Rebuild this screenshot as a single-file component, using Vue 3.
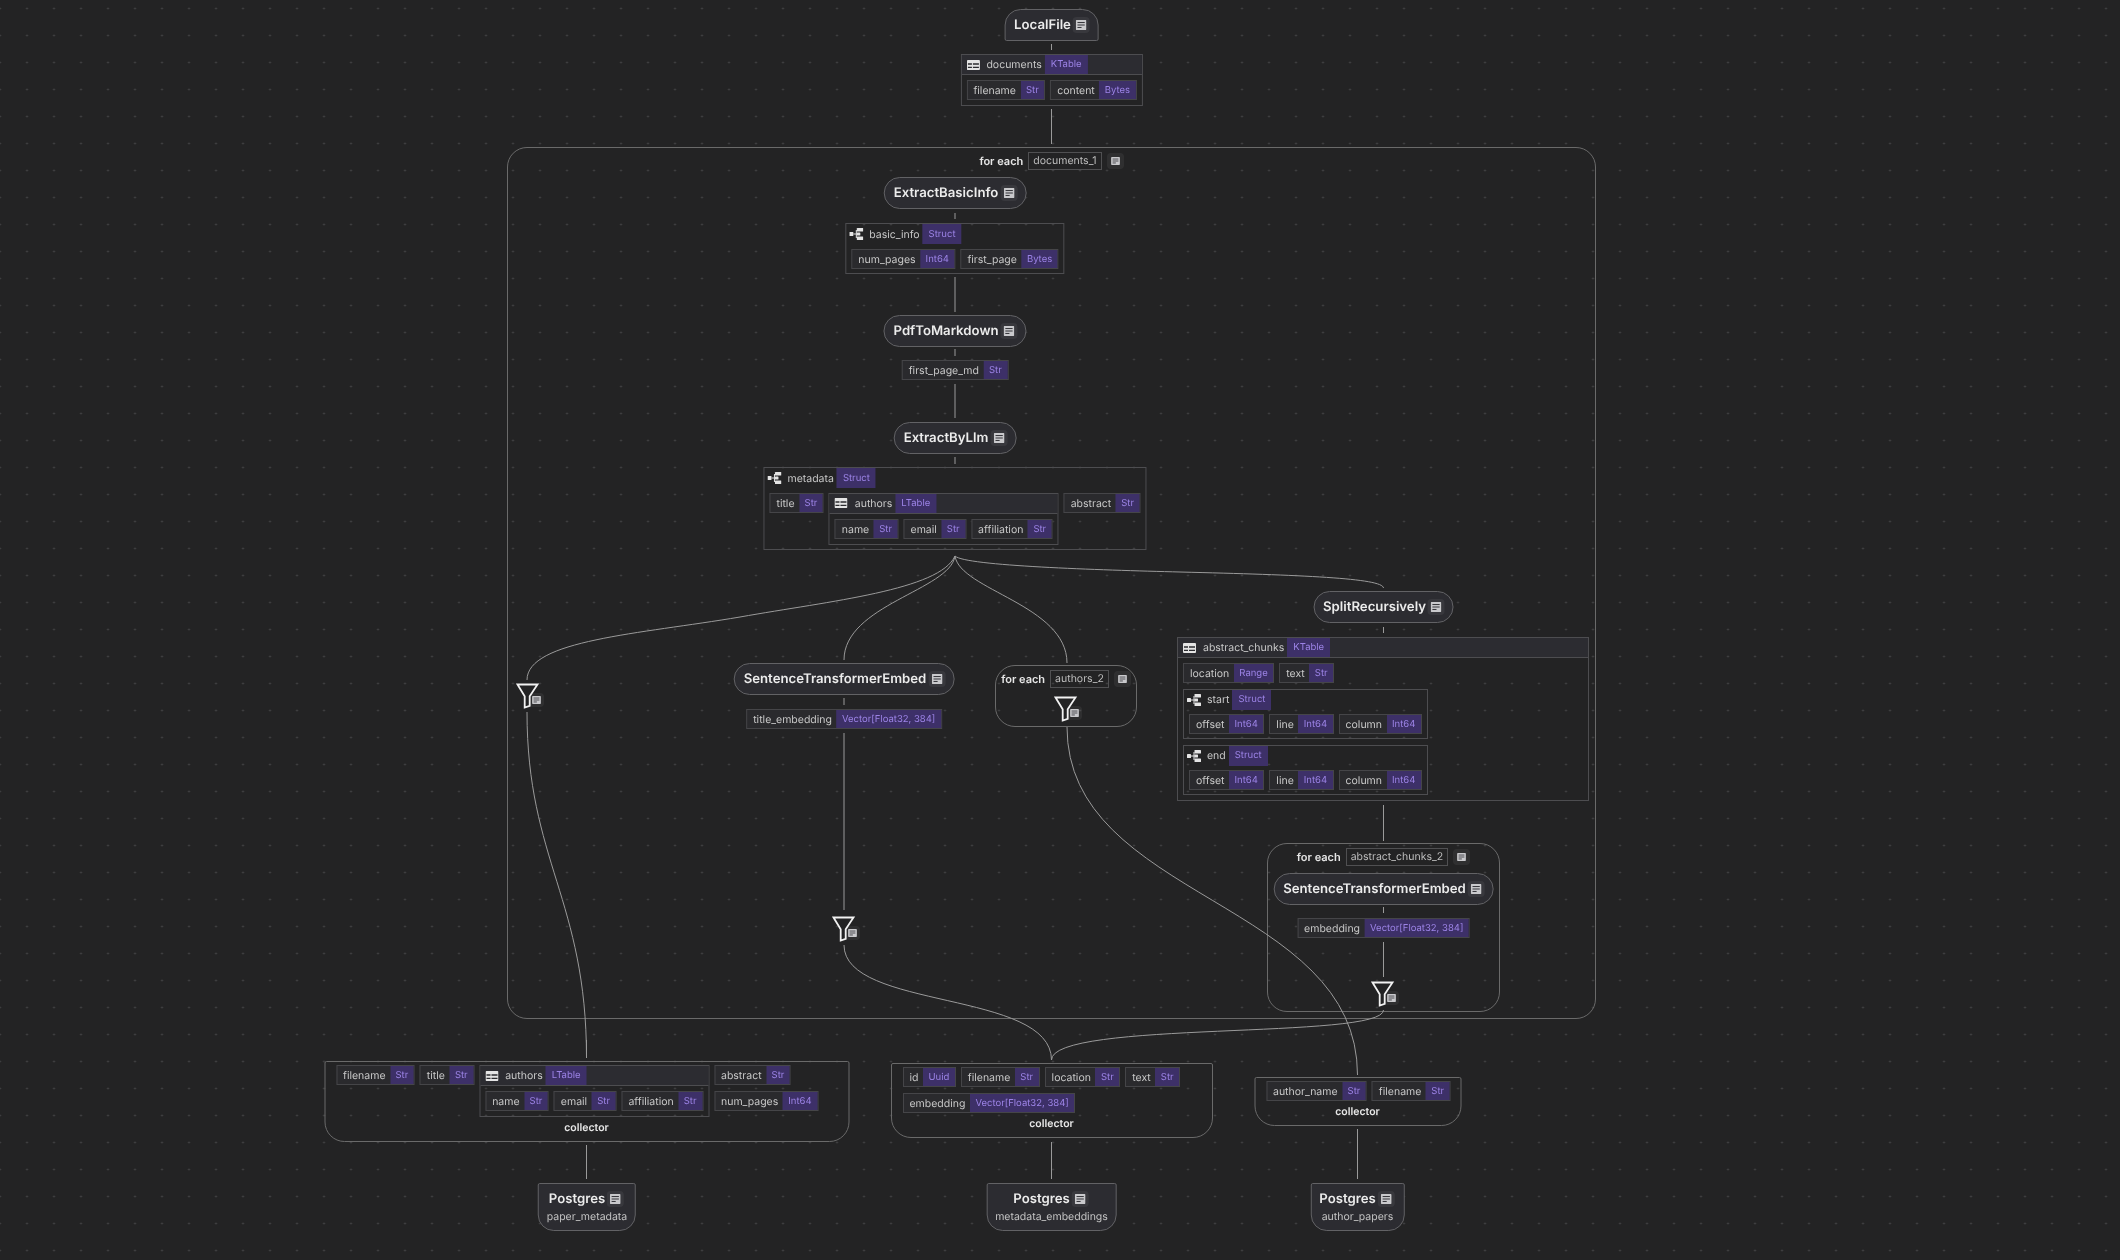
<template>
  <div class="canvas">
    <svg class="defs" width="0" height="0">
      <symbol id="note" viewBox="0 0 12 11">
        <rect width="12" height="11" rx="1" fill="#c9c9cc" />
        <path d="M2 2.8h8M2 5.5h8M2 8.2h4.5" stroke="#333338" stroke-width="1.1" fill="none" />
      </symbol>
      <symbol id="table" viewBox="0 0 13 10">
        <rect width="13" height="10" rx="1" fill="#e4e4e4" />
        <path d="M1 4h4M1 7.4h4M6 4h6M6 7.4h6" stroke="#2b2b2f" stroke-width="1.3" fill="none" />
      </symbol>
      <symbol id="struct" viewBox="0 0 14 12">
        <rect x="0" y="4" width="4" height="4" rx=".6" fill="#e4e4e4" />
        <path d="M4 6h4M7 2v8" stroke="#e4e4e4" stroke-width="1" fill="none" />
        <rect x="7.5" y="0" width="6.5" height="3.6" rx=".6" fill="#e4e4e4" />
        <rect x="7.5" y="4.4" width="3.5" height="3.2" rx=".6" fill="#e4e4e4" />
        <rect x="7.5" y="8.4" width="6.5" height="3.6" rx=".6" fill="#e4e4e4" />
      </symbol>
    </svg>

    <div
      v-for="g in groups"
      :key="g.name"
      class="node foreach"
      :style="{ left: g.x + 'px', top: g.y + 'px', width: g.w + 'px', height: g.h + 'px' }"
    >
      <div class="foreach-head">
        <span class="foreach-label">for each</span>
        <span class="foreach-name">{{ g.name }}</span>
        <span class="note-box"><svg class="note"><use href="#note" /></svg></span>
      </div>
    </div>

    <svg class="edges" width="2120" height="1260" viewBox="0 0 2120 1260">
      <path v-for="(d, i) in edges" :key="i" :d="d" />
    </svg>

    <div
      v-for="p in pills"
      :key="p.id"
      class="node op"
      :class="p.shape"
      :style="{ left: p.cx + 'px', top: p.y + 'px' }"
    >
      <div class="op-title">
        <span>{{ p.name }}</span>
        <span class="note-box"><svg class="note"><use href="#note" /></svg></span>
      </div>
      <div v-if="p.sub" class="op-sub">{{ p.sub }}</div>
    </div>

    <div
      v-for="s in schemas"
      :key="s.id"
      class="node"
      :class="{ collector: s.label }"
      :style="{ left: s.cx + 'px', top: s.y + 'px', width: s.w ? s.w + 'px' : null }"
    >
      <div class="schema" :class="[s.icon, { bare: !s.name }]">
        <div v-if="s.name" class="head">
          <svg :class="'ic-' + s.icon"><use :href="'#' + s.icon" /></svg>
          <span class="head-name">{{ s.name }}</span>
          <span class="tag">{{ s.type }}</span>
        </div>
        <div class="body">
          <div v-for="(row, ri) in s.rows" :key="ri" class="row">
            <template v-for="(it, ii) in row" :key="ii">
              <div v-if="it.stack" class="stack">
                <div v-for="f in it.stack" :key="f[0]" class="field">
                  <span class="fname">{{ f[0] }}</span><span class="tag">{{ f[1] }}</span>
                </div>
              </div>
              <div v-else-if="it.rows" class="schema" :class="it.icon">
                <div class="head">
                  <svg :class="'ic-' + it.icon"><use :href="'#' + it.icon" /></svg>
                  <span class="head-name">{{ it.name }}</span>
                  <span class="tag">{{ it.type }}</span>
                </div>
                <div class="body">
                  <div v-for="(r, rj) in it.rows" :key="rj" class="row">
                    <div v-for="f in r" :key="f[0]" class="field">
                      <span class="fname">{{ f[0] }}</span><span class="tag">{{ f[1] }}</span>
                    </div>
                  </div>
                </div>
              </div>
              <div v-else class="field">
                <span class="fname">{{ it[0] }}</span><span class="tag">{{ it[1] }}</span>
              </div>
            </template>
          </div>
        </div>
      </div>
      <div v-if="s.label" class="collector-label">{{ s.label }}</div>
    </div>

    <div
      v-for="f in filters"
      :key="f.x"
      class="filter"
      :style="{ left: f.x + 'px', top: f.y + 'px' }"
    >
      <svg width="24" height="26" viewBox="0 0 24 26">
        <path d="M1.5 1.5h20L13.7 13.2v9.6l-5 1.7V13.2z" fill="#232324" stroke="#f2f2f2" stroke-width="1.8" stroke-linejoin="miter" />
      </svg>
      <span class="note-box filter-note"><svg class="note"><use href="#note" /></svg></span>
    </div>
  </div>
</template>

<script setup>
const groups = [
  { name: 'documents_1', x: 507, y: 147, w: 1089, h: 872 },
  { name: 'authors_2', x: 995, y: 665, w: 142, h: 62 },
  { name: 'abstract_chunks_2', x: 1267, y: 843, w: 233, h: 169 }
]

const pills = [
  { id: 'local', name: 'LocalFile', cx: 1051.5, y: 9, shape: 'top' },
  { id: 'basic', name: 'ExtractBasicInfo', cx: 955, y: 177, shape: 'pill' },
  { id: 'pdf', name: 'PdfToMarkdown', cx: 955, y: 315, shape: 'pill' },
  { id: 'llm', name: 'ExtractByLlm', cx: 955, y: 422, shape: 'pill' },
  { id: 'split', name: 'SplitRecursively', cx: 1383.5, y: 591, shape: 'pill' },
  { id: 'ste1', name: 'SentenceTransformerEmbed', cx: 844, y: 663, shape: 'pill' },
  { id: 'ste2', name: 'SentenceTransformerEmbed', cx: 1383.5, y: 873, shape: 'pill' },
  { id: 'pg1', name: 'Postgres', sub: 'paper_metadata', cx: 587, y: 1183, shape: 'bottom' },
  { id: 'pg2', name: 'Postgres', sub: 'metadata_embeddings', cx: 1051.5, y: 1183, shape: 'bottom' },
  { id: 'pg3', name: 'Postgres', sub: 'author_papers', cx: 1357.5, y: 1183, shape: 'bottom' }
]

const nameEmailAff = [[['name', 'Str'], ['email', 'Str'], ['affiliation', 'Str']]]
const offsets = [[['offset', 'Int64'], ['line', 'Int64'], ['column', 'Int64']]]

const schemas = [
  {
    id: 'documents', name: 'documents', type: 'KTable', icon: 'table', cx: 1051.5, y: 54,
    rows: [[['filename', 'Str'], ['content', 'Bytes']]]
  },
  {
    id: 'basic_info', name: 'basic_info', type: 'Struct', icon: 'struct', cx: 955, y: 223,
    rows: [[['num_pages', 'Int64'], ['first_page', 'Bytes']]]
  },
  { id: 'first_page_md', cx: 955, y: 360, rows: [[['first_page_md', 'Str']]] },
  {
    id: 'metadata', name: 'metadata', type: 'Struct', icon: 'struct', cx: 955, y: 467,
    rows: [[
      ['title', 'Str'],
      { name: 'authors', type: 'LTable', icon: 'table', rows: nameEmailAff },
      ['abstract', 'Str']
    ]]
  },
  {
    id: 'abstract_chunks', name: 'abstract_chunks', type: 'KTable', icon: 'table', cx: 1383, y: 637, w: 412,
    rows: [
      [['location', 'Range'], ['text', 'Str']],
      [{ name: 'start', type: 'Struct', icon: 'struct', rows: offsets }],
      [{ name: 'end', type: 'Struct', icon: 'struct', rows: offsets }]
    ]
  },
  { id: 'title_embedding', cx: 844, y: 709, rows: [[['title_embedding', 'Vector[Float32, 384]']]] },
  { id: 'embedding', cx: 1383.5, y: 918, rows: [[['embedding', 'Vector[Float32, 384]']]] },
  {
    id: 'c1', label: 'collector', cx: 586.5, y: 1061, w: 525,
    rows: [[
      ['filename', 'Str'],
      ['title', 'Str'],
      { name: 'authors', type: 'LTable', icon: 'table', rows: nameEmailAff },
      { stack: [['abstract', 'Str'], ['num_pages', 'Int64']] }
    ]]
  },
  {
    id: 'c2', label: 'collector', cx: 1051.5, y: 1063, w: 322,
    rows: [
      [['id', 'Uuid'], ['filename', 'Str'], ['location', 'Str'], ['text', 'Str']],
      [['embedding', 'Vector[Float32, 384]']]
    ]
  },
  {
    id: 'c3', label: 'collector', cx: 1357.5, y: 1077, w: 207,
    rows: [[['author_name', 'Str'], ['filename', 'Str']]]
  }
]

const filters = [
  { x: 516.4, y: 683 },
  { x: 832.4, y: 916 },
  { x: 1054.4, y: 696 },
  { x: 1371.4, y: 981 }
]

const edges = [
  'M1051.5 44V50', 'M1051.5 109V144',
  'M955 213V219', 'M955 277V312', 'M955 349V356', 'M955 384V418', 'M955 457V464',
  'M1383.5 627V633', 'M1383.5 805V841',
  'M844 698V705', 'M844 733V910',
  'M1383.5 907V913', 'M1383.5 942V977',
  'M586.5 1145V1179', 'M1051.5 1142V1179', 'M1357.5 1129V1179', 'M586.5 1040V1058',
  'M955 556C940 590 830 601 740 617C640 634 527 640 527 680',
  'M955 556C950 590 844 605 844 660',
  'M955 556C960 590 1067 605 1067 663',
  'M955 556C965 566 1100 570 1180 572C1300 575 1383 578 1383.5 588',
  'M527 712C527 860 586.5 900 586.5 1058',
  'M844 945C844 1010 1051.5 990 1051.5 1060',
  'M1383.5 1010C1383.5 1040 1051.5 1020 1051.5 1060',
  'M1067 727C1067 900 1357.5 900 1357.5 1075'
]
</script>

<style>
html, body { margin: 0; background: #232324; }
</style>

<style scoped>
.canvas {
  position: relative;
  width: 2120px;
  height: 1260px;
  overflow: hidden;
  background-color: #232324;
  background-image: radial-gradient(circle, #4a4a4c 0.8px, transparent 1.1px);
  background-size: 27px 27px;
  background-position: -13.5px -5px;
  font-family: Inter, "Liberation Sans", sans-serif;
  color: #cfcfcf;
  text-rendering: geometricPrecision;
  filter: blur(0.3px);
}
.defs { position: absolute; }
.edges { position: absolute; inset: 0; pointer-events: none; }
.edges path { fill: none; stroke: #9a9a9a; stroke-width: 1; }

.node { position: absolute; transform: translateX(-50%); }
.foreach { transform: none; box-sizing: border-box; border: 1.2px solid #6a6a6a; border-radius: 20px; }
.foreach-head {
  display: flex; align-items: center; justify-content: center; gap: 5px;
  height: 18px; margin-top: 4px;
}
.foreach-label { font-size: 11px; font-weight: 600; color: #e6e6e6; }
.foreach-name {
  font-size: 10.5px; line-height: 16px; padding: 0 4px; color: #bdbdbd;
  border: 1px solid #505052;
}

.note-box {
  display: inline-flex; padding: 3px; border-radius: 4px; background: rgba(255, 255, 255, .06);
}
.note { width: 11px; height: 10px; display: block; }
.foreach-head .note-box { padding: 4px; }
.foreach-head .note { width: 9px; height: 8px; }

.op {
  box-sizing: border-box; background: #2c2c31; border: 1.2px solid #626265;
  white-space: nowrap;
}
.op-title {
  display: flex; align-items: center; justify-content: center; gap: 2px;
  font-size: 13.2px; font-weight: 600; color: #ececec; line-height: 19px;
}
.op-title .note-box { margin: -1px 1px 0 0; }
.op-sub { font-size: 10.5px; color: #c4c4c4; line-height: 14px; text-align: center; margin-top: 1px; }
.pill { height: 32px; border-radius: 16px; padding: 6px 7px 0 9px; }
.top { height: 32px; border-radius: 16px 16px 2px 2px; padding: 6px 7px 0 9px; }
.bottom { height: 48px; border-radius: 2px 2px 16px 16px; padding: 6px 8px 0 8px; }

.schema { box-sizing: border-box; border: 1px solid #4d4d50; width: max-content; }
.node > .schema { width: auto; }
.schema.bare { border: none; }
.head {
  display: flex; align-items: center; box-sizing: border-box; height: 20px; padding-left: 5px; white-space: nowrap;
}
.table > .head { background: #2c2c31; border-bottom: 1px solid #4d4d50; }
.struct > .head { padding-left: 3px; }
.head-name { font-size: 10.5px; color: #c8c8c8; margin-left: 7px; margin-right: 3px; }
.struct > .head .head-name { margin-left: 6px; }
.head .tag { height: 100%; }
.ic-table { width: 13px; height: 10px; flex: none; }
.ic-struct { width: 14px; height: 12px; flex: none; }
.body { display: flex; flex-direction: column; gap: 5.5px; padding: 5px; }
.struct > .body { padding: 4.5px 5px 4px; }
.bare > .body { padding: 0; }
.row { display: flex; align-items: flex-start; gap: 5px; }
.stack { display: flex; flex-direction: column; gap: 5.5px; }

.field {
  display: flex; align-items: stretch; height: 20px; box-sizing: border-box; width: max-content;
  background: #2a2a2d; border: 1px solid #454548; white-space: nowrap;
}
.fname { font-size: 10.5px; line-height: 19px; padding: 0 4.5px 0 6px; color: #c8c8c8; }
.tag {
  display: inline-flex; align-items: center; padding: 1px 5.5px 0;
  box-sizing: border-box;
  background: #3d3068; color: #9c83e6; font-size: 9.5px; white-space: nowrap;
}
.head .tag { padding: 0 6px; }

.collector { box-sizing: border-box; border: 1.2px solid #6a6a6a; border-radius: 2px 2px 20px 20px; padding: 3px 11px 6px; }
.collector-label { font-size: 10.5px; font-weight: 600; color: #e6e6e6; text-align: center; line-height: 14px; margin-top: 4px; }

.filter { position: absolute; width: 24px; height: 26px; }
.filter svg { display: block; }
.filter-note { position: absolute; left: 13px; top: 10px; }
.filter-note .note { width: 9px; height: 8px; }
</style>
